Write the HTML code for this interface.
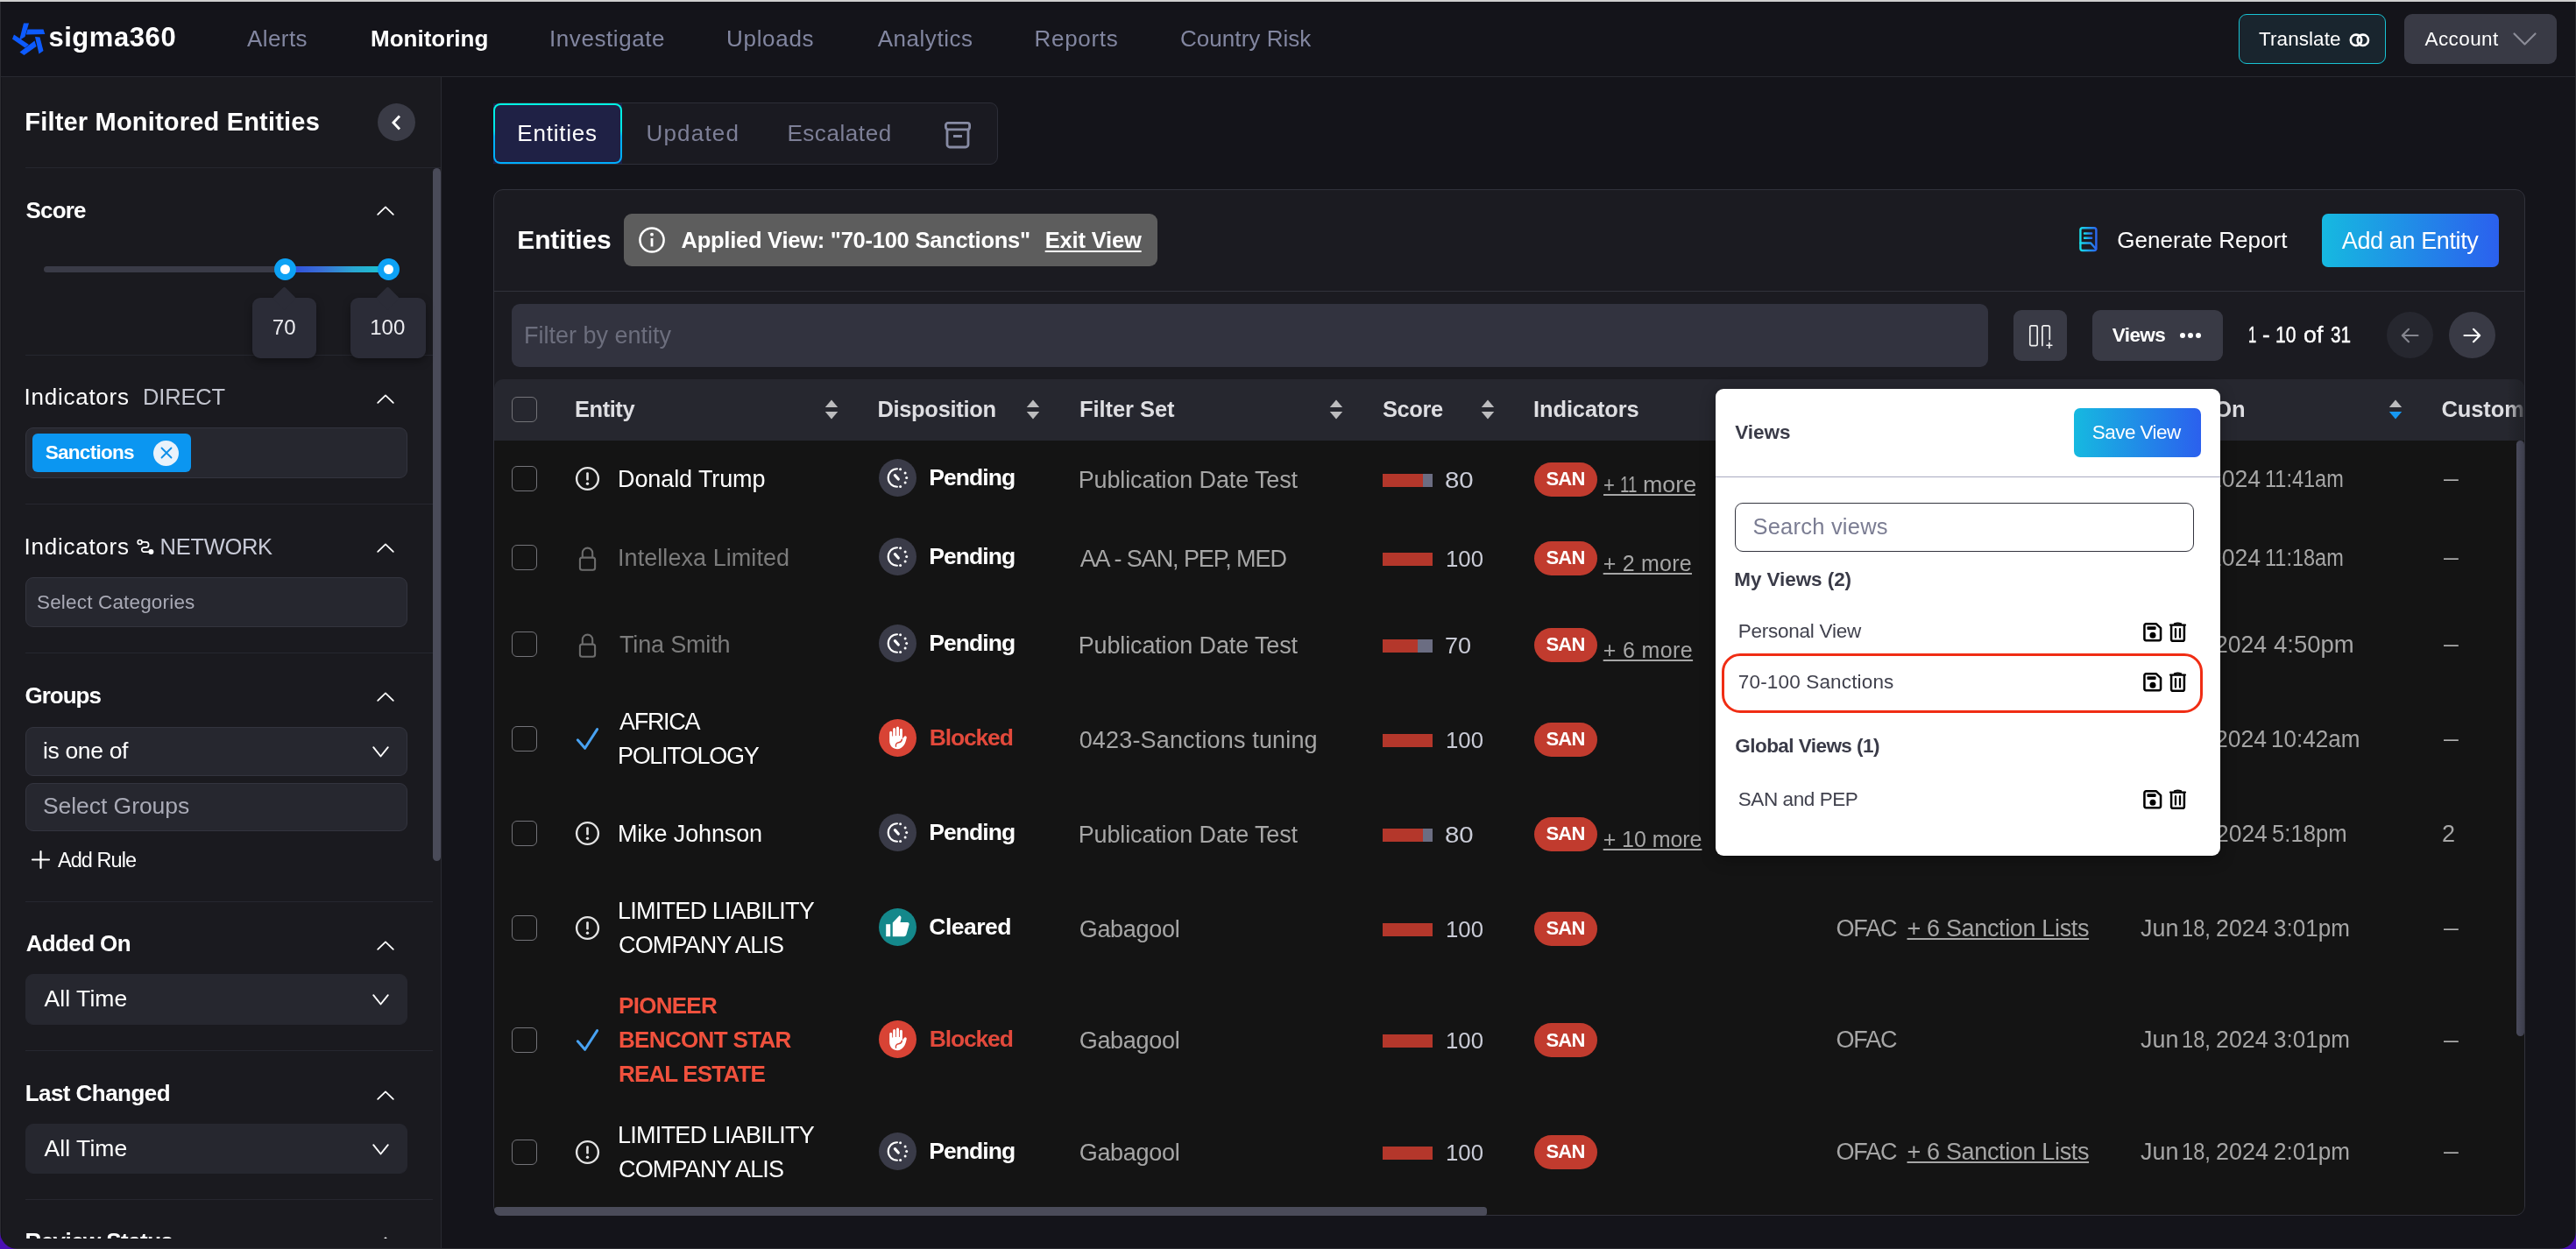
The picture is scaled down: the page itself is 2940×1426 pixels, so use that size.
<!DOCTYPE html>
<html lang="en">
<head>
<meta charset="utf-8">
<title>Sigma360 - Monitoring</title>
<style>
html,body{margin:0;padding:0;}
body{width:2940px;height:1426px;overflow:hidden;position:relative;background:#14141a;
 font-family:"Liberation Sans",sans-serif;color:#fff;}
.t{position:absolute;white-space:nowrap;line-height:1;}
.u{text-decoration:underline;text-decoration-thickness:2px;text-underline-offset:2px;}
div,svg{box-sizing:border-box;}
#app{position:absolute;left:0;top:0;width:2940px;height:1426px;overflow:hidden;will-change:transform;}
svg{position:absolute;overflow:visible;}
@media (max-width:1500px){#app{zoom:.5;}}
.abs{position:absolute;}
.cb{position:absolute;width:29px;height:29px;border:1.3px solid #737378;border-radius:6px;}
.div{position:absolute;height:1px;background:#26272f;}
.inp{position:absolute;background:#26272f;border:1px solid #33343e;border-radius:9px;}
.pill{position:absolute;background:#c13b2e;border-radius:20px;}
.bar{position:absolute;height:15px;width:57px;background:#b4372b;}
.bar i{position:absolute;right:0;top:0;height:15px;background:#6b6d82;}
.dc{position:absolute;width:43px;height:43px;border-radius:50%;}
</style>
</head>
<body>
<div id="app">
<div class="abs" style="left:0;top:0;width:2940px;height:2px;background:#cfcfcf"></div>
<div class="abs" style="left:0;top:2px;width:2940px;height:86px;background:#14141a;border-bottom:1px solid #27282f"></div>
<svg style="left:13px;top:25px" width="39" height="39" viewBox="0 0 39 39">
<g fill="#0d5bff">
<polygon points="14,1.5 20,1.5 15.5,17 9,21"/>
<polygon points="18.5,8.5 36.5,8.5 38.3,14 16.8,14.5"/>
<polygon points="27,17 32.5,17.5 36.5,33 31.5,36.5"/>
<polygon points="26.5,21.5 28.5,28 14.5,38 9.5,34.5"/>
<polygon points="3,14.5 20,26 15.5,29.5 1,19.5"/>
</g></svg>
<span class="t" style="left:55.4px;top:27px;font-size:31px;font-weight:700;letter-spacing:0.56px;">sigma360</span>
<span class="t" style="left:282.0px;top:31px;font-size:26px;color:#8286a0;letter-spacing:0.43px;">Alerts</span>
<span class="t" style="left:423.0px;top:31px;font-size:26px;font-weight:700;letter-spacing:0.01px;">Monitoring</span>
<span class="t" style="left:627.0px;top:31px;font-size:26px;color:#8286a0;letter-spacing:0.57px;">Investigate</span>
<span class="t" style="left:829.0px;top:31px;font-size:26px;color:#8286a0;letter-spacing:0.70px;">Uploads</span>
<span class="t" style="left:1001.7px;top:31px;font-size:26px;color:#8286a0;letter-spacing:0.53px;">Analytics</span>
<span class="t" style="left:1180.6px;top:31px;font-size:26px;color:#8286a0;letter-spacing:0.68px;">Reports</span>
<span class="t" style="left:1347.0px;top:31px;font-size:26px;color:#8286a0;letter-spacing:0.05px;">Country Risk</span>
<div class="abs" style="left:2555px;top:16px;width:168px;height:57px;background:#19252e;border:1.5px solid #18c3d4;border-radius:9px"></div>
<span class="t" style="left:2578.0px;top:34px;font-size:22.5px;letter-spacing:0.07px;">Translate</span>
<svg style="left:2681px;top:37px" width="24" height="17" viewBox="0 0 24 17"><g fill="none" stroke="#fff" stroke-width="2.6"><circle cx="8" cy="8.8" r="6.2"/><circle cx="15.8" cy="8.8" r="6.2"/></g></svg>
<div class="abs" style="left:2744px;top:16px;width:174px;height:57px;background:#393a45;border-radius:9px"></div>
<span class="t" style="left:2767.5px;top:34px;font-size:22.5px;letter-spacing:0.41px;">Account</span>
<svg style="left:2868px;top:37px" width="27" height="16" viewBox="0 0 27 16"><path d="M1.5 1.5 L13.5 13.5 L25.5 1.5" fill="none" stroke="#8b8c97" stroke-width="2.2" stroke-linecap="round" stroke-linejoin="round"/></svg>
<div class="abs" style="left:2px;top:88px;width:502px;height:1338px;background:#1a1a1f;border-right:1px solid #2a2b32"></div>
<span class="t" style="left:28.3px;top:125px;font-size:29px;font-weight:700;letter-spacing:0.19px;">Filter Monitored Entities</span>
<div class="abs" style="left:431px;top:118px;width:43px;height:43px;border-radius:50%;background:#3a3b46"></div>
<svg style="left:446px;top:131px" width="12" height="18" viewBox="0 0 12 18"><path d="M10 1.6 L3 9 L10 16.4" fill="none" stroke="#fff" stroke-width="2.9" stroke-linejoin="miter"/></svg>
<div class="div" style="left:29px;top:191px;width:474px"></div>
<div class="div" style="left:29px;top:405px;width:465px"></div>
<div class="div" style="left:29px;top:575px;width:465px"></div>
<div class="div" style="left:29px;top:745px;width:465px"></div>
<div class="div" style="left:29px;top:1029px;width:465px"></div>
<div class="div" style="left:29px;top:1199px;width:465px"></div>
<div class="div" style="left:29px;top:1369px;width:465px"></div>
<div class="abs" style="left:494px;top:192px;width:9px;height:791px;background:#4a4b59;border-radius:5px"></div>
<span class="t" style="left:29.5px;top:227px;font-size:26px;font-weight:700;letter-spacing:-0.83px;">Score</span>
<svg style="left:430px;top:235px" width="20" height="11" viewBox="0 0 20 11"><path d="M1.2 9.8 L10 1.4 L18.8 9.8" fill="none" stroke="#fff" stroke-width="1.8" stroke-linecap="round" stroke-linejoin="round"/></svg>
<div class="abs" style="left:50px;top:304px;width:394px;height:7px;border-radius:4px;background:#3a3b47"></div>
<div class="abs" style="left:326px;top:304px;width:118px;height:7px;background:linear-gradient(90deg,#2d48de 0%,#3a6fd6 35%,#2aa6d2 65%,#18c8cf 100%)"></div>
<div class="abs" style="left:313.1px;top:294.5px;width:25px;height:25px;border-radius:50%;background:#0da2f5"></div>
<div class="abs" style="left:320.1px;top:301.5px;width:11px;height:11px;border-radius:50%;background:#fff"></div>
<div class="abs" style="left:431.1px;top:294.5px;width:25px;height:25px;border-radius:50%;background:#0da2f5"></div>
<div class="abs" style="left:438.1px;top:301.5px;width:11px;height:11px;border-radius:50%;background:#fff"></div>
<div class="abs" style="left:288px;top:340px;width:73px;height:69px;border-radius:9px;background:#2b2c37;box-shadow:0 4px 10px rgba(0,0,0,.35)"></div>
<div class="abs" style="left:314.5px;top:331px;width:19px;height:19px;background:#2b2c37;transform:rotate(45deg);border-radius:2px"></div>
<div class="abs" style="left:400px;top:340px;width:86px;height:69px;border-radius:9px;background:#2b2c37;box-shadow:0 4px 10px rgba(0,0,0,.35)"></div>
<div class="abs" style="left:433px;top:331px;width:19px;height:19px;background:#2b2c37;transform:rotate(45deg);border-radius:2px"></div>
<span class="t" style="left:310.8px;top:362px;font-size:24px;color:#ececf0;">70</span>
<span class="t" style="left:422.2px;top:362px;font-size:24px;color:#ececf0;">100</span>
<span class="t" style="left:27.5px;top:440px;font-size:26px;letter-spacing:0.75px;">Indicators</span>
<span class="t" style="left:163.0px;top:441px;font-size:25.5px;color:#c3c5cf;letter-spacing:-0.17px;">DIRECT</span>
<svg style="left:430px;top:449.5px" width="20" height="11" viewBox="0 0 20 11"><path d="M1.2 9.8 L10 1.4 L18.8 9.8" fill="none" stroke="#fff" stroke-width="1.8" stroke-linecap="round" stroke-linejoin="round"/></svg>
<div class="inp" style="left:29px;top:488px;width:436px;height:58px"></div>
<div class="abs" style="left:37px;top:495px;width:181px;height:44px;border-radius:6px;background:#0b96f1"></div>
<span class="t" style="left:51.7px;top:506px;font-size:22.5px;font-weight:700;letter-spacing:-0.71px;">Sanctions</span>
<div class="abs" style="left:175px;top:502.5px;width:29px;height:29px;border-radius:50%;background:#e9f2fb"></div>
<svg style="left:182.5px;top:510px" width="14" height="14" viewBox="0 0 14 14"><path d="M1.5 1.5 L12.5 12.5 M12.5 1.5 L1.5 12.5" stroke="#0b8de8" stroke-width="1.8" stroke-linecap="round"/></svg>
<span class="t" style="left:27.5px;top:611px;font-size:26px;letter-spacing:0.75px;">Indicators</span>
<svg style="left:156px;top:615px" width="20" height="19" viewBox="0 0 20 19"><g fill="none" stroke="#fff" stroke-width="1.7" stroke-linecap="round"><circle cx="3.6" cy="3.9" r="2.4"/><path d="M6 3.9 H10.5 a3.1 3.1 0 0 1 0 6.2 H8.3 a2.5 2.5 0 0 0 0 5 H13.5"/></g><circle cx="16.4" cy="15.1" r="3" fill="#fff"/></svg>
<span class="t" style="left:182.6px;top:612px;font-size:25.5px;color:#c9cbd8;letter-spacing:-0.32px;">NETWORK</span>
<svg style="left:430px;top:620px" width="20" height="11" viewBox="0 0 20 11"><path d="M1.2 9.8 L10 1.4 L18.8 9.8" fill="none" stroke="#fff" stroke-width="1.8" stroke-linecap="round" stroke-linejoin="round"/></svg>
<div class="inp" style="left:29px;top:659px;width:436px;height:57px"></div>
<span class="t" style="left:42.0px;top:677px;font-size:22.5px;color:#a9aab6;letter-spacing:0.17px;">Select Categories</span>
<span class="t" style="left:28.5px;top:781px;font-size:26px;font-weight:700;letter-spacing:-1.00px;">Groups</span>
<svg style="left:430px;top:790px" width="20" height="11" viewBox="0 0 20 11"><path d="M1.2 9.8 L10 1.4 L18.8 9.8" fill="none" stroke="#fff" stroke-width="1.8" stroke-linecap="round" stroke-linejoin="round"/></svg>
<div class="inp" style="left:29px;top:829.5px;width:436px;height:56.5px"></div>
<span class="t" style="left:49.0px;top:844px;font-size:26.5px;letter-spacing:-0.35px;">is one of</span>
<svg style="left:425px;top:851.5px" width="19" height="13" viewBox="0 0 19 13"><path d="M1.2 1.2 L9.5 11.5 L17.8 1.2" fill="none" stroke="#fff" stroke-width="1.9" stroke-linecap="round" stroke-linejoin="round"/></svg>
<div class="inp" style="left:29px;top:893.5px;width:436px;height:55.5px"></div>
<span class="t" style="left:49.0px;top:907px;font-size:26.5px;color:#a9aab6;letter-spacing:-0.06px;">Select Groups</span>
<svg style="left:36px;top:971px" width="21" height="21" viewBox="0 0 21 21"><path d="M10.5 1 V20 M1 10.5 H20" stroke="#fff" stroke-width="2.2" stroke-linecap="round"/></svg>
<span class="t" style="left:66.0px;top:971px;font-size:23.5px;letter-spacing:-0.94px;">Add Rule</span>
<span class="t" style="left:29.7px;top:1064px;font-size:26px;font-weight:700;letter-spacing:-0.62px;">Added On</span>
<svg style="left:430px;top:1074px" width="20" height="11" viewBox="0 0 20 11"><path d="M1.2 9.8 L10 1.4 L18.8 9.8" fill="none" stroke="#fff" stroke-width="1.8" stroke-linecap="round" stroke-linejoin="round"/></svg>
<div class="inp" style="left:29px;top:1112px;width:436px;height:57.5px;border-color:#26272f"></div>
<span class="t" style="left:50.5px;top:1127px;font-size:26.5px;letter-spacing:0.07px;">All Time</span>
<svg style="left:425px;top:1134.5px" width="19" height="13" viewBox="0 0 19 13"><path d="M1.2 1.2 L9.5 11.5 L17.8 1.2" fill="none" stroke="#fff" stroke-width="1.9" stroke-linecap="round" stroke-linejoin="round"/></svg>
<span class="t" style="left:28.7px;top:1235px;font-size:26px;font-weight:700;letter-spacing:-0.55px;">Last Changed</span>
<svg style="left:430px;top:1244.5px" width="20" height="11" viewBox="0 0 20 11"><path d="M1.2 9.8 L10 1.4 L18.8 9.8" fill="none" stroke="#fff" stroke-width="1.8" stroke-linecap="round" stroke-linejoin="round"/></svg>
<div class="inp" style="left:29px;top:1283px;width:436px;height:56.5px;border-color:#26272f"></div>
<span class="t" style="left:50.5px;top:1298px;font-size:26.5px;letter-spacing:0.07px;">All Time</span>
<svg style="left:425px;top:1305.5px" width="19" height="13" viewBox="0 0 19 13"><path d="M1.2 1.2 L9.5 11.5 L17.8 1.2" fill="none" stroke="#fff" stroke-width="1.9" stroke-linecap="round" stroke-linejoin="round"/></svg>
<div class="abs" style="left:2px;top:1380px;width:500px;height:34px;overflow:hidden">
<span class="t" style="left:26.5px;top:24px;font-size:26px;font-weight:700;letter-spacing:-0.57px;">Review Status</span>
<svg style="left:428px;top:32px" width="20" height="11" viewBox="0 0 20 11"><path d="M1.2 9.8 L10 1.4 L18.8 9.8" fill="none" stroke="#fff" stroke-width="1.8" stroke-linecap="round"/></svg>
</div>
<div class="abs" style="left:563px;top:117px;width:576px;height:71px;background:#1a1a21;border:1px solid #2d2e38;border-radius:9px"></div>
<div class="abs" style="left:563px;top:118px;width:147px;height:69px;background:#1d1f47"></div>
<div class="abs" style="left:563px;top:118px;width:147px;height:69px;border-radius:8px;background:linear-gradient(180deg,#00f5e4 0%,#00e6ea 45%,#00b4ff 55%,#00aeff 100%)"></div>
<div class="abs" style="left:565px;top:120px;width:143px;height:65px;border-radius:6px;background:#1f2145"></div>
<span class="t" style="left:590.3px;top:139px;font-size:26px;letter-spacing:0.78px;">Entities</span>
<span class="t" style="left:737.5px;top:139px;font-size:26px;color:#7d7f97;letter-spacing:1.19px;">Updated</span>
<span class="t" style="left:898.4px;top:139px;font-size:26px;color:#7d7f97;letter-spacing:0.57px;">Escalated</span>
<svg style="left:1077px;top:138px" width="32" height="33" viewBox="0 0 32 33"><g fill="none" stroke="#878ba4" stroke-width="2.8" stroke-linejoin="round"><rect x="2.4" y="2.4" width="27.2" height="7.4" rx="2.5"/><path d="M4 10 V27 a3 3 0 0 0 3 3 H25 a3 3 0 0 0 3 -3 V10"/></g><rect x="11" y="16" width="10" height="3" fill="#878ba4"/></svg>
<div class="abs" style="left:562.5px;top:216px;width:2319px;height:1172px;background:#1b1b21;border:1px solid #31323b;border-radius:11px"></div>
<span class="t" style="left:590.3px;top:259px;font-size:30px;font-weight:700;letter-spacing:-0.14px;">Entities</span>
<div class="abs" style="left:712px;top:244px;width:609px;height:60px;background:#5d5d5d;border-radius:9px"></div>
<svg style="left:728px;top:258px" width="32" height="32" viewBox="0 0 32 32"><circle cx="16" cy="16" r="13.6" fill="none" stroke="#fff" stroke-width="2.5"/><rect x="14.6" y="14" width="2.8" height="9.5" fill="#fff"/><circle cx="16" cy="9.7" r="1.9" fill="#fff"/></svg>
<span class="t" style="left:777.5px;top:262px;font-size:25.5px;font-weight:700;letter-spacing:-0.25px;">Applied View: "70-100 Sanctions"</span>
<span class="t u" style="left:1192.7px;top:262px;font-size:25.5px;font-weight:700;letter-spacing:-0.17px;text-underline-offset:3px;">Exit View</span>
<svg style="left:2371px;top:258px" width="25" height="30" viewBox="0 0 25 30"><defs><linearGradient id="gr" x1="0" x2="1" y1="0" y2="0"><stop offset="0" stop-color="#17dbe8"/><stop offset="1" stop-color="#2b66f0"/></linearGradient></defs><g fill="none" stroke="url(#gr)" stroke-width="2.4" stroke-linecap="round" stroke-linejoin="round"><rect x="3.4" y="2.2" width="18" height="25.8" rx="2.4"/><path d="M8 8.5 H16.2 M8 13.8 H16.2"/><path d="M3.4 19.5 H15.2 L21.2 26.2"/></g></svg>
<span class="t" style="left:2416.2px;top:261px;font-size:26px;letter-spacing:0.05px;">Generate Report</span>
<div class="abs" style="left:2650px;top:243.5px;width:202px;height:61px;border-radius:7px;background:linear-gradient(90deg,#16b9e0,#2b60ee)"></div>
<span class="t" style="left:2672.8px;top:262px;font-size:27px;letter-spacing:-0.38px;">Add an Entity</span>
<div class="abs" style="left:563.5px;top:332px;width:2317px;height:1px;background:#31323b"></div>
<div class="abs" style="left:584px;top:347px;width:1685px;height:72px;background:#32333f;border-radius:9px"></div>
<span class="t" style="left:598.0px;top:370px;font-size:27px;color:#6c6e7d;">Filter by entity</span>
<div class="abs" style="left:2298px;top:354px;width:61px;height:58px;background:#393a45;border-radius:9px"></div>
<svg style="left:2314px;top:369px" width="32" height="32" viewBox="0 0 32 32"><g fill="none" stroke="#f0f0f0" stroke-width="1.7" stroke-linecap="round"><rect x="2.8" y="2.9" width="8.4" height="22.8" rx="1.6"/><path d="M16.9 25.4 V4.6 a1.7 1.7 0 0 1 1.7 -1.7 H23.6 a1.7 1.7 0 0 1 1.7 1.7 V18.5"/><path d="M24.9 22.3 V28.3 M21.9 25.3 H27.9" stroke-width="1.6"/></g></svg>
<div class="abs" style="left:2388px;top:354px;width:149px;height:58px;background:#393a45;border-radius:9px"></div>
<span class="t" style="left:2410.8px;top:372px;font-size:22.5px;font-weight:700;letter-spacing:-0.62px;">Views</span>
<div class="abs" style="left:2488.4px;top:380.4px;width:6px;height:6px;border-radius:50%;background:#fff"></div>
<div class="abs" style="left:2497.2px;top:380.4px;width:6px;height:6px;border-radius:50%;background:#fff"></div>
<div class="abs" style="left:2506px;top:380.4px;width:6px;height:6px;border-radius:50%;background:#fff"></div>
<span class="t" style="left:2565.5px;top:369px;font-size:26px;transform:scaleX(0.638);transform-origin:0 0;-webkit-text-stroke:0.45px #fff;">1</span>
<span class="t" style="left:2581.9px;top:369px;font-size:26px;-webkit-text-stroke:0.45px #fff;">-</span>
<span class="t" style="left:2596.9px;top:369px;font-size:26px;transform:scaleX(0.812);transform-origin:0 0;-webkit-text-stroke:0.45px #fff;">10</span>
<span class="t" style="left:2629.0px;top:369px;font-size:26px;transform:scaleX(1.030);transform-origin:0 0;-webkit-text-stroke:0.45px #fff;">of</span>
<span class="t" style="left:2659.8px;top:369px;font-size:26px;transform:scaleX(0.798);transform-origin:0 0;-webkit-text-stroke:0.45px #fff;">31</span>
<div class="abs" style="left:2724px;top:356px;width:53.3px;height:53.3px;border-radius:50%;background:#26272f"></div>
<svg style="left:2740px;top:373.6px" width="21" height="18" viewBox="0 0 21 18"><path d="M19.5 9 H2 M9 1.8 L1.8 9 L9 16.2" fill="none" stroke="#85868f" stroke-width="2.2" stroke-linecap="round" stroke-linejoin="round"/></svg>
<div class="abs" style="left:2795px;top:356px;width:53.3px;height:53.3px;border-radius:50%;background:#393a45"></div>
<svg style="left:2811px;top:373.6px" width="21" height="18" viewBox="0 0 21 18"><path d="M1.5 9 H19 M12 1.8 L19.2 9 L12 16.2" fill="none" stroke="#fff" stroke-width="2.2" stroke-linecap="round" stroke-linejoin="round"/></svg>
<div class="abs" style="left:563.5px;top:502px;width:2317px;height:885px;background:#141414;border-radius:0 0 10px 10px"></div>
<div class="abs" style="left:563.5px;top:433px;width:2317px;height:70px;background:#26272f;border-radius:10px 10px 0 0"></div>
<div class="abs" style="left:2872.3px;top:503px;width:8.5px;height:680px;background:linear-gradient(90deg,#4a4b5c,#3d3e4c);border-radius:5px"></div>
<div class="abs" style="left:563.5px;top:1377.5px;width:1133px;height:10px;background:#4a4b59;border-radius:5px 5px 5px 9px"></div>
<div class="cb" style="left:584px;top:453px"></div>
<span class="t" style="left:656.0px;top:455px;font-size:25.5px;font-weight:700;color:#dedee2;letter-spacing:-0.45px;">Entity</span>
<svg style="left:941px;top:456px" width="16" height="23" viewBox="0 0 16 23"><path d="M8 0.5 L15.2 9 H0.8 Z" fill="#bcbcbe"/><path d="M8 22.5 L15.2 14 H0.8 Z" fill="#bcbcbe"/></svg>
<span class="t" style="left:1001.4px;top:455px;font-size:25.5px;font-weight:700;color:#dedee2;letter-spacing:-0.32px;">Disposition</span>
<svg style="left:1171px;top:456px" width="16" height="23" viewBox="0 0 16 23"><path d="M8 0.5 L15.2 9 H0.8 Z" fill="#bcbcbe"/><path d="M8 22.5 L15.2 14 H0.8 Z" fill="#bcbcbe"/></svg>
<span class="t" style="left:1232.0px;top:455px;font-size:25.5px;font-weight:700;color:#dedee2;letter-spacing:-0.07px;">Filter Set</span>
<svg style="left:1516.5px;top:456px" width="16" height="23" viewBox="0 0 16 23"><path d="M8 0.5 L15.2 9 H0.8 Z" fill="#bcbcbe"/><path d="M8 22.5 L15.2 14 H0.8 Z" fill="#bcbcbe"/></svg>
<span class="t" style="left:1578.0px;top:455px;font-size:25.5px;font-weight:700;color:#dedee2;letter-spacing:-0.42px;">Score</span>
<svg style="left:1690px;top:456px" width="16" height="23" viewBox="0 0 16 23"><path d="M8 0.5 L15.2 9 H0.8 Z" fill="#bcbcbe"/><path d="M8 22.5 L15.2 14 H0.8 Z" fill="#bcbcbe"/></svg>
<span class="t" style="left:1750.0px;top:455px;font-size:25.5px;font-weight:700;color:#dedee2;letter-spacing:-0.12px;">Indicators</span>
<span class="t" style="left:2096.5px;top:455px;font-size:25.5px;font-weight:700;color:#dedee2;letter-spacing:-0.65px;">Sanctions</span>
<span class="t" style="left:2442.0px;top:455px;font-size:25.5px;font-weight:700;color:#dedee2;letter-spacing:-0.18px;">Added On</span>
<svg style="left:2726px;top:456px" width="16" height="23" viewBox="0 0 16 23"><path d="M8 0.5 L15.2 9 H0.8 Z" fill="#bcbcbe"/><path d="M8 22.5 L15.2 14 H0.8 Z" fill="#1698f2"/></svg>
<div class="abs" style="left:2780px;top:440px;width:100.5px;height:60px;overflow:hidden">
<span class="t" style="left:6.4px;top:15px;font-size:25.5px;font-weight:700;color:#dedee2;letter-spacing:-0.08px;">Custom Fields</span>
</div>
<div class="abs" style="left:2862px;top:433px;width:18.5px;height:70px;border-radius:0 10px 0 0;background:linear-gradient(90deg,rgba(31,32,38,0),rgba(31,32,38,.85))"></div>
<div class="cb" style="left:584px;top:532px"></div>
<svg style="left:656px;top:532px" width="29" height="29" viewBox="0 0 29 29"><circle cx="14.5" cy="14.5" r="12.4" fill="none" stroke="#e4e4e4" stroke-width="2.4"/><rect x="13.2" y="7.3" width="2.6" height="9.2" rx="1" fill="#e4e4e4"/><circle cx="14.5" cy="20.2" r="1.7" fill="#e4e4e4"/></svg>
<span class="t" style="left:705.0px;top:534px;font-size:27px;letter-spacing:-0.10px;">Donald Trump</span>
<div class="dc" style="left:1003px;top:523.8px;background:#3a3b48"><svg style="left:0;top:0" width="43" height="43" viewBox="0 0 43 43"><g fill="none" stroke="#fff" stroke-linecap="round"><path d="M21 11.2 A10.3 10.3 0 0 0 21 31.8" stroke-width="2.1"/><path d="M18.4 18.6 L22.3 23" stroke-width="3.2"/></g><g fill="#fff"><circle cx="24.6" cy="11.7" r="1.5"/><circle cx="30.1" cy="16" r="1.5"/><circle cx="31.7" cy="21.6" r="1.5"/><circle cx="30.1" cy="27" r="1.5"/><circle cx="24.6" cy="31.4" r="1.5"/></g></svg></div>
<span class="t" style="left:1060.2px;top:532px;font-size:26.5px;font-weight:700;letter-spacing:-0.91px;">Pending</span>
<span class="t" style="left:1230.7px;top:535px;font-size:27px;color:#a6a6a6;letter-spacing:-0.14px;">Publication Date Test</span>
<div class="bar" style="left:1578px;top:541px"><i style="width:11px"></i></div>
<span class="t" style="left:1649.3px;top:536px;font-size:25px;color:#c9cbd6;transform:scaleX(1.177);transform-origin:0 0;">80</span>
<div class="pill" style="left:1751px;top:528px;width:72px;height:39px"></div>
<span class="t" style="left:1764.4px;top:536px;font-size:22px;font-weight:700;letter-spacing:-0.78px;">SAN</span>
<span class="t" style="left:1829.8px;top:541px;font-size:25px;color:#a6a6a6;transform:scaleX(0.885);transform-origin:0 0;">+</span>
<span class="t" style="left:1848.5px;top:541px;font-size:25px;color:#a6a6a6;transform:scaleX(0.748);transform-origin:0 0;">11</span>
<span class="t" style="left:1874.6px;top:541px;font-size:25px;color:#a6a6a6;transform:scaleX(1.073);transform-origin:0 0;">more</span>
<div class="abs" style="left:1830.2px;top:564px;width:105.1px;height:2px;background:#a6a6a6"></div>
<span class="t" style="left:2434.5px;top:534px;font-size:27px;color:#a6a6a6;">Jun</span>
<span class="t" style="left:2483.0px;top:534px;font-size:27px;color:#a6a6a6;">21,</span>
<span class="t" style="left:2520.5px;top:534px;font-size:27px;color:#a6a6a6;transform:scaleX(0.984);transform-origin:0 0;">2024</span>
<span class="t" style="left:2585.3px;top:534px;font-size:27px;color:#a6a6a6;transform:scaleX(0.871);transform-origin:0 0;">11:41am</span>
<span class="t" style="left:2789.0px;top:540px;font-size:16.8px;font-weight:700;color:#b0b0b0;">—</span>
<div class="cb" style="left:584px;top:622px"></div>
<svg style="left:659px;top:622px" width="23" height="30" viewBox="0 -0.8 23 30"><g fill="none" stroke="#6c6c6c" stroke-width="2.1" stroke-linejoin="round"><rect x="2.9" y="13.8" width="17.2" height="14.2" rx="2.5"/><path d="M5.8 13.8 V8.5 a5.7 5.7 0 0 1 11.4 0 V13.8"/></g></svg>
<span class="t" style="left:705.0px;top:624px;font-size:27px;color:#7b7b7b;letter-spacing:0.06px;">Intellexa Limited</span>
<div class="dc" style="left:1003px;top:613.8px;background:#3a3b48"><svg style="left:0;top:0" width="43" height="43" viewBox="0 0 43 43"><g fill="none" stroke="#fff" stroke-linecap="round"><path d="M21 11.2 A10.3 10.3 0 0 0 21 31.8" stroke-width="2.1"/><path d="M18.4 18.6 L22.3 23" stroke-width="3.2"/></g><g fill="#fff"><circle cx="24.6" cy="11.7" r="1.5"/><circle cx="30.1" cy="16" r="1.5"/><circle cx="31.7" cy="21.6" r="1.5"/><circle cx="30.1" cy="27" r="1.5"/><circle cx="24.6" cy="31.4" r="1.5"/></g></svg></div>
<span class="t" style="left:1060.2px;top:622px;font-size:26.5px;font-weight:700;letter-spacing:-0.91px;">Pending</span>
<span class="t" style="left:1232.7px;top:625px;font-size:27px;color:#a6a6a6;letter-spacing:-1.08px;">AA - SAN, PEP, MED</span>
<div class="bar" style="left:1578px;top:631px"></div>
<span class="t" style="left:1649.5px;top:626px;font-size:25px;color:#c9cbd6;transform:scaleX(1.030);transform-origin:0 0;">100</span>
<div class="pill" style="left:1751px;top:618px;width:72px;height:39px"></div>
<span class="t" style="left:1764.4px;top:626px;font-size:22px;font-weight:700;letter-spacing:-0.78px;">SAN</span>
<span class="t u" style="left:1829.7px;top:631px;font-size:25px;color:#a6a6a6;letter-spacing:0.24px;">+ 2 more</span>
<span class="t" style="left:2434.5px;top:624px;font-size:27px;color:#a6a6a6;">Jun</span>
<span class="t" style="left:2483.0px;top:624px;font-size:27px;color:#a6a6a6;">21,</span>
<span class="t" style="left:2520.5px;top:624px;font-size:27px;color:#a6a6a6;transform:scaleX(0.984);transform-origin:0 0;">2024</span>
<span class="t" style="left:2585.3px;top:624px;font-size:27px;color:#a6a6a6;transform:scaleX(0.871);transform-origin:0 0;">11:18am</span>
<span class="t" style="left:2789.0px;top:630px;font-size:16.8px;font-weight:700;color:#b0b0b0;">—</span>
<div class="cb" style="left:584px;top:721px"></div>
<svg style="left:659px;top:721px" width="23" height="30" viewBox="0 -0.8 23 30"><g fill="none" stroke="#6c6c6c" stroke-width="2.1" stroke-linejoin="round"><rect x="2.9" y="13.8" width="17.2" height="14.2" rx="2.5"/><path d="M5.8 13.8 V8.5 a5.7 5.7 0 0 1 11.4 0 V13.8"/></g></svg>
<span class="t" style="left:707.0px;top:723px;font-size:27px;color:#7b7b7b;letter-spacing:-0.17px;">Tina Smith</span>
<div class="dc" style="left:1003px;top:712.8px;background:#3a3b48"><svg style="left:0;top:0" width="43" height="43" viewBox="0 0 43 43"><g fill="none" stroke="#fff" stroke-linecap="round"><path d="M21 11.2 A10.3 10.3 0 0 0 21 31.8" stroke-width="2.1"/><path d="M18.4 18.6 L22.3 23" stroke-width="3.2"/></g><g fill="#fff"><circle cx="24.6" cy="11.7" r="1.5"/><circle cx="30.1" cy="16" r="1.5"/><circle cx="31.7" cy="21.6" r="1.5"/><circle cx="30.1" cy="27" r="1.5"/><circle cx="24.6" cy="31.4" r="1.5"/></g></svg></div>
<span class="t" style="left:1060.2px;top:721px;font-size:26.5px;font-weight:700;letter-spacing:-0.91px;">Pending</span>
<span class="t" style="left:1230.7px;top:724px;font-size:27px;color:#a6a6a6;letter-spacing:-0.14px;">Publication Date Test</span>
<div class="bar" style="left:1578px;top:730px"><i style="width:17px"></i></div>
<span class="t" style="left:1649.4px;top:725px;font-size:25px;color:#c9cbd6;transform:scaleX(1.081);transform-origin:0 0;">70</span>
<div class="pill" style="left:1751px;top:717px;width:72px;height:39px"></div>
<span class="t" style="left:1764.4px;top:725px;font-size:22px;font-weight:700;letter-spacing:-0.78px;">SAN</span>
<span class="t u" style="left:1829.7px;top:730px;font-size:25px;color:#a6a6a6;letter-spacing:0.38px;">+ 6 more</span>
<span class="t" style="left:2442.7px;top:723px;font-size:27px;color:#a6a6a6;transform:scaleX(0.997);transform-origin:0 0;">Jun</span>
<span class="t" style="left:2491.2px;top:723px;font-size:27px;color:#a6a6a6;transform:scaleX(0.851);transform-origin:0 0;">20,</span>
<span class="t" style="left:2528.0px;top:723px;font-size:27px;color:#a6a6a6;transform:scaleX(0.982);transform-origin:0 0;">2024</span>
<span class="t" style="left:2595.3px;top:723px;font-size:27px;color:#a6a6a6;transform:scaleX(1.018);transform-origin:0 0;">4:50pm</span>
<span class="t" style="left:2789.0px;top:729px;font-size:16.8px;font-weight:700;color:#b0b0b0;">—</span>
<div class="cb" style="left:584px;top:829px"></div>
<svg style="left:656px;top:829px" width="29" height="29" viewBox="0 0 29 29"><path d="M3.3 15.8 L11.6 25.3 L25.6 3.6" fill="none" stroke="#48a2f2" stroke-width="3" stroke-linecap="round" stroke-linejoin="round"/></svg>
<span class="t" style="left:707.0px;top:811px;font-size:27px;letter-spacing:-1.30px;">AFRICA</span>
<span class="t" style="left:705.0px;top:850px;font-size:27px;letter-spacing:-1.32px;">POLITOLOGY</span>
<div class="dc" style="left:1003px;top:820.8px;background:#d84335"><svg style="left:11px;top:7px" width="22" height="29" viewBox="0 0 22 29"><path fill="#fff" d="M1.2 8.2 a1.5 1.5 0 0 1 3 0 V12.5 h0.9 V4.6 a1.5 1.5 0 0 1 3 0 V12 h0.9 V3 a1.5 1.5 0 0 1 3 0 V12 h0.9 V5.2 a1.5 1.5 0 0 1 3 0 V15.6 l2 -2.6 a1.6 1.6 0 0 1 2.8 1.4 c-0.6 3 -1.6 6.4 -3.4 8.9 c-1.7 2.4 -4 3.9 -7.3 3.9 c-5.3 0 -8.8 -3.8 -8.8 -9.4 z"/><path d="M8.5 24.2 c-0.5 -2.6 0.8 -4.1 3.2 -4.4 c2.2 -0.3 3.4 -1.3 3.7 -3.6" fill="none" stroke="#d84335" stroke-width="1.4" stroke-linecap="round"/></svg></div>
<span class="t" style="left:1060.7px;top:829px;font-size:26.5px;font-weight:700;color:#e2493b;letter-spacing:-1.15px;">Blocked</span>
<span class="t" style="left:1231.7px;top:832px;font-size:27px;color:#a6a6a6;letter-spacing:0.16px;">0423-Sanctions tuning</span>
<div class="bar" style="left:1578px;top:838px"></div>
<span class="t" style="left:1649.5px;top:833px;font-size:25px;color:#c9cbd6;transform:scaleX(1.030);transform-origin:0 0;">100</span>
<div class="pill" style="left:1751px;top:825px;width:72px;height:39px"></div>
<span class="t" style="left:1764.4px;top:833px;font-size:22px;font-weight:700;letter-spacing:-0.78px;">SAN</span>
<span class="t" style="left:2442.7px;top:831px;font-size:27px;color:#a6a6a6;transform:scaleX(0.997);transform-origin:0 0;">Jun</span>
<span class="t" style="left:2491.2px;top:831px;font-size:27px;color:#a6a6a6;transform:scaleX(0.851);transform-origin:0 0;">20,</span>
<span class="t" style="left:2528.0px;top:831px;font-size:27px;color:#a6a6a6;transform:scaleX(0.982);transform-origin:0 0;">2024</span>
<span class="t" style="left:2592.1px;top:831px;font-size:27px;color:#a6a6a6;transform:scaleX(0.965);transform-origin:0 0;">10:42am</span>
<span class="t" style="left:2789.0px;top:837px;font-size:16.8px;font-weight:700;color:#b0b0b0;">—</span>
<div class="cb" style="left:584px;top:937px"></div>
<svg style="left:656px;top:937px" width="29" height="29" viewBox="0 0 29 29"><circle cx="14.5" cy="14.5" r="12.4" fill="none" stroke="#e4e4e4" stroke-width="2.4"/><rect x="13.2" y="7.3" width="2.6" height="9.2" rx="1" fill="#e4e4e4"/><circle cx="14.5" cy="20.2" r="1.7" fill="#e4e4e4"/></svg>
<span class="t" style="left:705.0px;top:939px;font-size:27px;letter-spacing:-0.14px;">Mike Johnson</span>
<div class="dc" style="left:1003px;top:928.8px;background:#3a3b48"><svg style="left:0;top:0" width="43" height="43" viewBox="0 0 43 43"><g fill="none" stroke="#fff" stroke-linecap="round"><path d="M21 11.2 A10.3 10.3 0 0 0 21 31.8" stroke-width="2.1"/><path d="M18.4 18.6 L22.3 23" stroke-width="3.2"/></g><g fill="#fff"><circle cx="24.6" cy="11.7" r="1.5"/><circle cx="30.1" cy="16" r="1.5"/><circle cx="31.7" cy="21.6" r="1.5"/><circle cx="30.1" cy="27" r="1.5"/><circle cx="24.6" cy="31.4" r="1.5"/></g></svg></div>
<span class="t" style="left:1060.2px;top:937px;font-size:26.5px;font-weight:700;letter-spacing:-0.91px;">Pending</span>
<span class="t" style="left:1230.7px;top:940px;font-size:27px;color:#a6a6a6;letter-spacing:-0.14px;">Publication Date Test</span>
<div class="bar" style="left:1578px;top:946px"><i style="width:11px"></i></div>
<span class="t" style="left:1649.3px;top:941px;font-size:25px;color:#c9cbd6;transform:scaleX(1.177);transform-origin:0 0;">80</span>
<div class="pill" style="left:1751px;top:933px;width:72px;height:39px"></div>
<span class="t" style="left:1764.4px;top:941px;font-size:22px;font-weight:700;letter-spacing:-0.78px;">SAN</span>
<span class="t u" style="left:1829.7px;top:946px;font-size:25px;color:#a6a6a6;letter-spacing:-0.06px;">+ 10 more</span>
<span class="t" style="left:2442.7px;top:939px;font-size:27px;color:#a6a6a6;transform:scaleX(0.997);transform-origin:0 0;">Jun</span>
<span class="t" style="left:2490.3px;top:939px;font-size:27px;color:#a6a6a6;transform:scaleX(0.876);transform-origin:0 0;">18,</span>
<span class="t" style="left:2528.5px;top:939px;font-size:27px;color:#a6a6a6;transform:scaleX(0.979);transform-origin:0 0;">2024</span>
<span class="t" style="left:2593.3px;top:939px;font-size:27px;color:#a6a6a6;transform:scaleX(0.950);transform-origin:0 0;">5:18pm</span>
<span class="t" style="left:2787.0px;top:939px;font-size:27px;color:#a6a6a6;">2</span>
<div class="cb" style="left:584px;top:1045px"></div>
<svg style="left:656px;top:1045px" width="29" height="29" viewBox="0 0 29 29"><circle cx="14.5" cy="14.5" r="12.4" fill="none" stroke="#e4e4e4" stroke-width="2.4"/><rect x="13.2" y="7.3" width="2.6" height="9.2" rx="1" fill="#e4e4e4"/><circle cx="14.5" cy="20.2" r="1.7" fill="#e4e4e4"/></svg>
<span class="t" style="left:705.0px;top:1027px;font-size:27px;letter-spacing:-0.77px;">LIMITED LIABILITY</span>
<span class="t" style="left:706.0px;top:1066px;font-size:27px;letter-spacing:-0.87px;">COMPANY ALIS</span>
<div class="dc" style="left:1003px;top:1036.8px;background:#14888b"><svg style="left:7px;top:7px" width="29" height="27" viewBox="0 0 29 27"><g fill="#fff"><rect x="1.2" y="11.2" width="5" height="14"/><path d="M8.8 25.2 V9.6 L16.6 1.2 c1.4 0.4 2.2 1.6 1.8 3.2 L17.5 9 H25.6 c1.4 0 2.3 1.1 2 2.5 L24.4 23 c-0.4 1.4 -1.3 2.2 -2.7 2.2 z"/></g></svg></div>
<span class="t" style="left:1060.3px;top:1045px;font-size:26.5px;font-weight:700;letter-spacing:-0.50px;">Cleared</span>
<span class="t" style="left:1231.7px;top:1048px;font-size:27px;color:#a6a6a6;letter-spacing:-0.30px;">Gabagool</span>
<div class="bar" style="left:1578px;top:1054px"></div>
<span class="t" style="left:1649.5px;top:1049px;font-size:25px;color:#c9cbd6;transform:scaleX(1.030);transform-origin:0 0;">100</span>
<div class="pill" style="left:1751px;top:1041px;width:72px;height:39px"></div>
<span class="t" style="left:1764.4px;top:1049px;font-size:22px;font-weight:700;letter-spacing:-0.78px;">SAN</span>
<span class="t" style="left:2095.5px;top:1047px;font-size:27px;color:#a6a6a6;letter-spacing:-1.17px;">OFAC</span>
<span class="t u" style="left:2176.5px;top:1047px;font-size:27px;color:#a6a6a6;letter-spacing:-0.35px;">+ 6 Sanction Lists</span>
<span class="t" style="left:2442.7px;top:1047px;font-size:27px;color:#a6a6a6;transform:scaleX(0.997);transform-origin:0 0;">Jun</span>
<span class="t" style="left:2490.3px;top:1047px;font-size:27px;color:#a6a6a6;transform:scaleX(0.876);transform-origin:0 0;">18,</span>
<span class="t" style="left:2528.8px;top:1047px;font-size:27px;color:#a6a6a6;transform:scaleX(0.991);transform-origin:0 0;">2024</span>
<span class="t" style="left:2595.3px;top:1047px;font-size:27px;color:#a6a6a6;transform:scaleX(0.964);transform-origin:0 0;">3:01pm</span>
<span class="t" style="left:2789.0px;top:1053px;font-size:16.8px;font-weight:700;color:#b0b0b0;">—</span>
<div class="cb" style="left:584px;top:1173px"></div>
<svg style="left:656px;top:1173px" width="29" height="29" viewBox="0 0 29 29"><path d="M3.3 15.8 L11.6 25.3 L25.6 3.6" fill="none" stroke="#48a2f2" stroke-width="3" stroke-linecap="round" stroke-linejoin="round"/></svg>
<span class="t" style="left:706.0px;top:1135px;font-size:26px;font-weight:700;color:#f0513d;letter-spacing:-0.71px;">PIONEER</span>
<span class="t" style="left:706.0px;top:1174px;font-size:26px;font-weight:700;color:#f0513d;letter-spacing:-0.66px;">BENCONT STAR</span>
<span class="t" style="left:706.0px;top:1213px;font-size:26px;font-weight:700;color:#f0513d;letter-spacing:-0.84px;">REAL ESTATE</span>
<div class="dc" style="left:1003px;top:1164.8px;background:#d84335"><svg style="left:11px;top:7px" width="22" height="29" viewBox="0 0 22 29"><path fill="#fff" d="M1.2 8.2 a1.5 1.5 0 0 1 3 0 V12.5 h0.9 V4.6 a1.5 1.5 0 0 1 3 0 V12 h0.9 V3 a1.5 1.5 0 0 1 3 0 V12 h0.9 V5.2 a1.5 1.5 0 0 1 3 0 V15.6 l2 -2.6 a1.6 1.6 0 0 1 2.8 1.4 c-0.6 3 -1.6 6.4 -3.4 8.9 c-1.7 2.4 -4 3.9 -7.3 3.9 c-5.3 0 -8.8 -3.8 -8.8 -9.4 z"/><path d="M8.5 24.2 c-0.5 -2.6 0.8 -4.1 3.2 -4.4 c2.2 -0.3 3.4 -1.3 3.7 -3.6" fill="none" stroke="#d84335" stroke-width="1.4" stroke-linecap="round"/></svg></div>
<span class="t" style="left:1060.7px;top:1173px;font-size:26.5px;font-weight:700;color:#e2493b;letter-spacing:-1.15px;">Blocked</span>
<span class="t" style="left:1231.7px;top:1175px;font-size:27px;color:#a6a6a6;letter-spacing:-0.30px;">Gabagool</span>
<div class="bar" style="left:1578px;top:1181.4px"></div>
<span class="t" style="left:1649.5px;top:1176px;font-size:25px;color:#c9cbd6;transform:scaleX(1.030);transform-origin:0 0;">100</span>
<div class="pill" style="left:1751px;top:1168.4px;width:72px;height:39px"></div>
<span class="t" style="left:1764.4px;top:1177px;font-size:22px;font-weight:700;letter-spacing:-0.78px;">SAN</span>
<span class="t" style="left:2095.5px;top:1174px;font-size:27px;color:#a6a6a6;letter-spacing:-1.17px;">OFAC</span>
<span class="t" style="left:2442.7px;top:1174px;font-size:27px;color:#a6a6a6;transform:scaleX(0.997);transform-origin:0 0;">Jun</span>
<span class="t" style="left:2490.3px;top:1174px;font-size:27px;color:#a6a6a6;transform:scaleX(0.876);transform-origin:0 0;">18,</span>
<span class="t" style="left:2528.8px;top:1174px;font-size:27px;color:#a6a6a6;transform:scaleX(0.991);transform-origin:0 0;">2024</span>
<span class="t" style="left:2595.3px;top:1174px;font-size:27px;color:#a6a6a6;transform:scaleX(0.964);transform-origin:0 0;">3:01pm</span>
<span class="t" style="left:2789.0px;top:1181px;font-size:16.8px;font-weight:700;color:#b0b0b0;">—</span>
<div class="cb" style="left:584px;top:1301px"></div>
<svg style="left:656px;top:1301px" width="29" height="29" viewBox="0 0 29 29"><circle cx="14.5" cy="14.5" r="12.4" fill="none" stroke="#e4e4e4" stroke-width="2.4"/><rect x="13.2" y="7.3" width="2.6" height="9.2" rx="1" fill="#e4e4e4"/><circle cx="14.5" cy="20.2" r="1.7" fill="#e4e4e4"/></svg>
<span class="t" style="left:705.0px;top:1283px;font-size:27px;letter-spacing:-0.77px;">LIMITED LIABILITY</span>
<span class="t" style="left:706.0px;top:1322px;font-size:27px;letter-spacing:-0.87px;">COMPANY ALIS</span>
<div class="dc" style="left:1003px;top:1292.8px;background:#3a3b48"><svg style="left:0;top:0" width="43" height="43" viewBox="0 0 43 43"><g fill="none" stroke="#fff" stroke-linecap="round"><path d="M21 11.2 A10.3 10.3 0 0 0 21 31.8" stroke-width="2.1"/><path d="M18.4 18.6 L22.3 23" stroke-width="3.2"/></g><g fill="#fff"><circle cx="24.6" cy="11.7" r="1.5"/><circle cx="30.1" cy="16" r="1.5"/><circle cx="31.7" cy="21.6" r="1.5"/><circle cx="30.1" cy="27" r="1.5"/><circle cx="24.6" cy="31.4" r="1.5"/></g></svg></div>
<span class="t" style="left:1060.2px;top:1301px;font-size:26.5px;font-weight:700;letter-spacing:-0.91px;">Pending</span>
<span class="t" style="left:1231.7px;top:1303px;font-size:27px;color:#a6a6a6;letter-spacing:-0.30px;">Gabagool</span>
<div class="bar" style="left:1578px;top:1309.2px"></div>
<span class="t" style="left:1649.5px;top:1304px;font-size:25px;color:#c9cbd6;transform:scaleX(1.030);transform-origin:0 0;">100</span>
<div class="pill" style="left:1751px;top:1296.2px;width:72px;height:39px"></div>
<span class="t" style="left:1764.4px;top:1304px;font-size:22px;font-weight:700;letter-spacing:-0.78px;">SAN</span>
<span class="t" style="left:2095.5px;top:1302px;font-size:27px;color:#a6a6a6;letter-spacing:-1.17px;">OFAC</span>
<span class="t u" style="left:2176.5px;top:1302px;font-size:27px;color:#a6a6a6;letter-spacing:-0.35px;">+ 6 Sanction Lists</span>
<span class="t" style="left:2442.7px;top:1302px;font-size:27px;color:#a6a6a6;transform:scaleX(0.997);transform-origin:0 0;">Jun</span>
<span class="t" style="left:2490.3px;top:1302px;font-size:27px;color:#a6a6a6;transform:scaleX(0.876);transform-origin:0 0;">18,</span>
<span class="t" style="left:2528.8px;top:1302px;font-size:27px;color:#a6a6a6;transform:scaleX(0.997);transform-origin:0 0;">2024</span>
<span class="t" style="left:2594.8px;top:1302px;font-size:27px;color:#a6a6a6;transform:scaleX(0.965);transform-origin:0 0;">2:01pm</span>
<span class="t" style="left:2789.0px;top:1308px;font-size:16.8px;font-weight:700;color:#b0b0b0;">—</span>
<div class="abs" style="left:1958px;top:444px;width:576px;height:532.5px;background:#fff;border-radius:9px;box-shadow:0 4px 18px rgba(0,0,0,.3)"></div>
<span class="t" style="left:1980.3px;top:483px;font-size:22.5px;font-weight:700;color:#3a3b48;letter-spacing:-0.04px;">Views</span>
<div class="abs" style="left:2367px;top:466px;width:145px;height:55.5px;border-radius:7px;background:linear-gradient(90deg,#16b9e0,#2b60ee)"></div>
<span class="t" style="left:2387.8px;top:483px;font-size:22.5px;letter-spacing:-0.56px;">Save View</span>
<div class="abs" style="left:1958px;top:544px;width:576px;height:1px;background:#a9aac0"></div>
<div class="abs" style="left:1980px;top:574px;width:523.5px;height:55.5px;border:1.5px solid #33343e;border-radius:9px"></div>
<span class="t" style="left:2000.4px;top:589px;font-size:25.5px;color:#7b7d93;letter-spacing:0.23px;">Search views</span>
<span class="t" style="left:1979.3px;top:651px;font-size:22.5px;font-weight:700;color:#3a3b48;letter-spacing:-0.08px;">My Views (2)</span>
<span class="t" style="left:1980.3px;top:841px;font-size:22.5px;font-weight:700;color:#3a3b48;letter-spacing:-0.55px;">Global Views (1)</span>
<span class="t" style="left:1983.8px;top:710px;font-size:22.5px;color:#40414d;letter-spacing:-0.25px;">Personal View</span>
<svg style="left:2444.6px;top:709.5px" width="23.4" height="23.4" viewBox="0 0 24 24"><path d="M4.4 2.4 H16.4 L21.6 7.3 V19.8 a1.9 1.9 0 0 1 -1.9 1.9 H4.4 a1.9 1.9 0 0 1 -1.9 -1.9 V4.3 a1.9 1.9 0 0 1 1.9 -1.9 z" fill="none" stroke="#000" stroke-width="2.6" stroke-linejoin="round"/><rect x="5.6" y="5.4" width="10.4" height="3.8" rx="1" fill="#000"/><circle cx="12.3" cy="15.6" r="3.6" fill="#000"/></svg>
<svg style="left:2475px;top:709.5px" width="21" height="24" viewBox="0 0 21 24"><g fill="none" stroke="#000" stroke-linecap="round" stroke-linejoin="round"><path d="M2 3.6 H19" stroke-width="2.2"/><path d="M6.8 2.2 Q10.5 0.6 14.2 2.2" stroke-width="2"/><path d="M3.1 4.6 V20 a1.8 1.8 0 0 0 1.8 1.8 H16.1 a1.8 1.8 0 0 0 1.8 -1.8 V4.6" stroke-width="2.5"/><path d="M8 8.2 V17.6 M13 8.2 V17.6" stroke-width="2.3"/></g></svg>
<span class="t" style="left:1983.8px;top:768px;font-size:22.5px;color:#40414d;letter-spacing:0.16px;">70-100 Sanctions</span>
<svg style="left:2444.6px;top:767px" width="23.4" height="23.4" viewBox="0 0 24 24"><path d="M4.4 2.4 H16.4 L21.6 7.3 V19.8 a1.9 1.9 0 0 1 -1.9 1.9 H4.4 a1.9 1.9 0 0 1 -1.9 -1.9 V4.3 a1.9 1.9 0 0 1 1.9 -1.9 z" fill="none" stroke="#000" stroke-width="2.6" stroke-linejoin="round"/><rect x="5.6" y="5.4" width="10.4" height="3.8" rx="1" fill="#000"/><circle cx="12.3" cy="15.6" r="3.6" fill="#000"/></svg>
<svg style="left:2475px;top:767px" width="21" height="24" viewBox="0 0 21 24"><g fill="none" stroke="#000" stroke-linecap="round" stroke-linejoin="round"><path d="M2 3.6 H19" stroke-width="2.2"/><path d="M6.8 2.2 Q10.5 0.6 14.2 2.2" stroke-width="2"/><path d="M3.1 4.6 V20 a1.8 1.8 0 0 0 1.8 1.8 H16.1 a1.8 1.8 0 0 0 1.8 -1.8 V4.6" stroke-width="2.5"/><path d="M8 8.2 V17.6 M13 8.2 V17.6" stroke-width="2.3"/></g></svg>
<span class="t" style="left:1983.8px;top:902px;font-size:22.5px;color:#40414d;letter-spacing:-0.43px;">SAN and PEP</span>
<svg style="left:2444.6px;top:901px" width="23.4" height="23.4" viewBox="0 0 24 24"><path d="M4.4 2.4 H16.4 L21.6 7.3 V19.8 a1.9 1.9 0 0 1 -1.9 1.9 H4.4 a1.9 1.9 0 0 1 -1.9 -1.9 V4.3 a1.9 1.9 0 0 1 1.9 -1.9 z" fill="none" stroke="#000" stroke-width="2.6" stroke-linejoin="round"/><rect x="5.6" y="5.4" width="10.4" height="3.8" rx="1" fill="#000"/><circle cx="12.3" cy="15.6" r="3.6" fill="#000"/></svg>
<svg style="left:2475px;top:901px" width="21" height="24" viewBox="0 0 21 24"><g fill="none" stroke="#000" stroke-linecap="round" stroke-linejoin="round"><path d="M2 3.6 H19" stroke-width="2.2"/><path d="M6.8 2.2 Q10.5 0.6 14.2 2.2" stroke-width="2"/><path d="M3.1 4.6 V20 a1.8 1.8 0 0 0 1.8 1.8 H16.1 a1.8 1.8 0 0 0 1.8 -1.8 V4.6" stroke-width="2.5"/><path d="M8 8.2 V17.6 M13 8.2 V17.6" stroke-width="2.3"/></g></svg>
<div class="abs" style="left:1964.5px;top:745.5px;width:549.5px;height:68px;border:3px solid #f02d14;border-radius:21px"></div>
<div class="abs" style="left:0;top:2px;width:1px;height:1424px;background:#2c2c31"></div>
<div class="abs" style="left:2939px;top:2px;width:1px;height:1424px;background:#2c2c31"></div>
<div class="abs" style="left:0;top:1425px;width:2940px;height:1px;background:#2c2c31"></div>
<svg style="left:0;top:1406px" width="20" height="20" viewBox="0 0 20 20"><path d="M0 0 V20 H20 A20 20 0 0 1 0 0 z" fill="#4a0fb4"/></svg>
<svg style="left:2920px;top:1406px" width="20" height="20" viewBox="0 0 20 20"><path d="M20 0 V20 H0 A20 20 0 0 0 20 0 z" fill="#4a0fb4"/></svg>
</div>
</body>
</html>
